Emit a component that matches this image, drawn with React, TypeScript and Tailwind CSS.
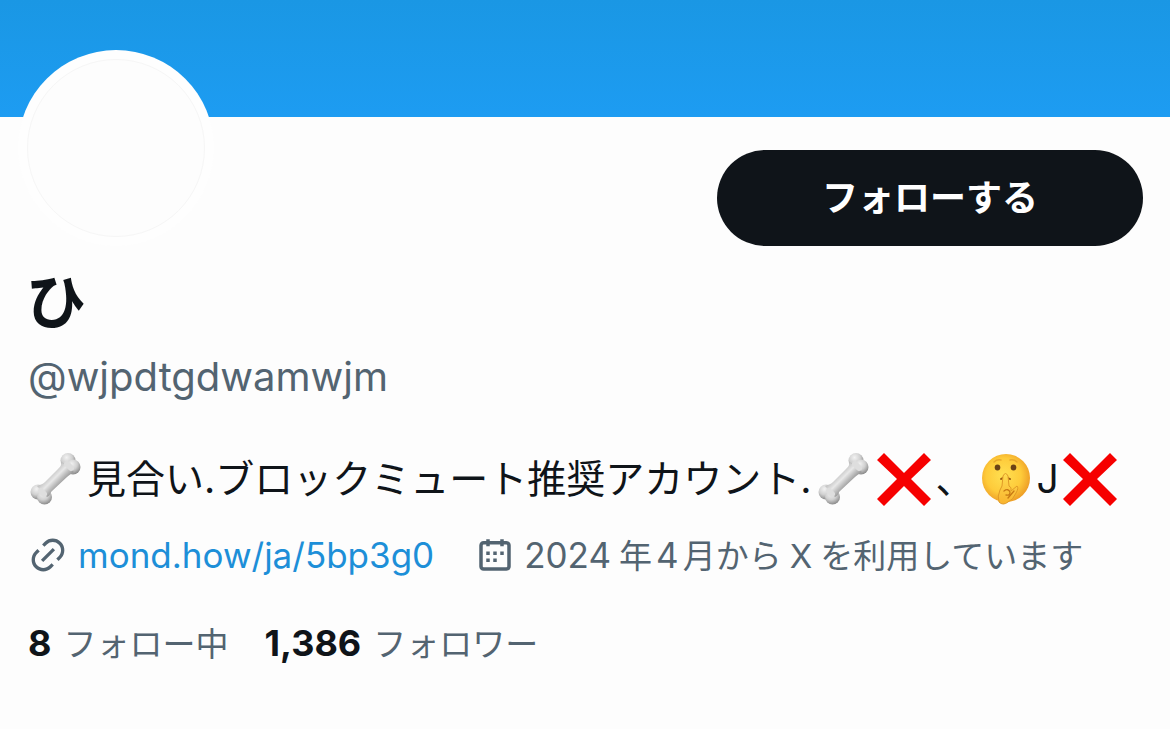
const textFont = "font-['Inter','Noto_Sans_CJK_JP',sans-serif]";

const BoneEmoji = () => (
  <svg viewBox="0 0 58 58" className="size-[58px] shrink-0" role="img" aria-label="bone">
    <defs>
      <radialGradient id="knob" cx="0.4" cy="0.3" r="0.7">
        <stop offset="0" stopColor="#f2f2f2" />
        <stop offset="0.55" stopColor="#d0d0d0" />
        <stop offset="1" stopColor="#8c8c8c" />
      </radialGradient>
      <linearGradient id="shaft" gradientUnits="userSpaceOnUse" x1="22" y1="24" x2="33" y2="35">
        <stop offset="0" stopColor="#c2c2c2" />
        <stop offset="0.4" stopColor="#e8e8e8" />
        <stop offset="1" stopColor="#949494" />
      </linearGradient>
    </defs>
    <circle cx="40" cy="10.5" r="7.5" fill="url(#knob)" />
    <circle cx="10" cy="42" r="7.5" fill="url(#knob)" />
    <circle cx="45" cy="17" r="7.5" fill="url(#knob)" />
    <circle cx="16.5" cy="47" r="7.5" fill="url(#knob)" />
    <path
      d="M33 12C34 15 32 17 30 19L17 32C14 35 11 35 9 36L19 47C22 46 22 43 24 41L39 27C41 25 43 24 46 22Z"
      fill="url(#shaft)"
    />
    <path d="M39 14L43 18M13 41L16 44" stroke="#dedede" strokeWidth="6" strokeLinecap="round" />
  </svg>
);

const CrossEmoji = () => (
  <svg viewBox="0 0 58 58" className="size-[58px] shrink-0" role="img" aria-label="cross mark">
    <path d="M9 3L29 23L49 3L56 10L36 29L56 49L49 56L29 36L9 56L2 49L22 29L2 10Z" fill="#f60000" />
  </svg>
);

const ShushEmoji = () => (
  <svg viewBox="0 0 58 58" className="size-[58px] shrink-0" role="img" aria-label="shushing face">
    <defs>
      <radialGradient id="face" cx="0.45" cy="0.45" r="0.56">
        <stop offset="0" stopColor="#ffe052" />
        <stop offset="0.65" stopColor="#fecb3a" />
        <stop offset="1" stopColor="#ee9f27" />
      </radialGradient>
      <linearGradient id="hand" x1="0" y1="0" x2="0" y2="1">
        <stop offset="0" stopColor="#ffdc50" />
        <stop offset="1" stopColor="#f9b42e" />
      </linearGradient>
    </defs>
    <circle cx="29" cy="28" r="24" fill="url(#face)" />
    <path d="M17 12Q20 9 24 10M33 10Q37 9 40 12" fill="none" stroke="#e8a92c" strokeWidth="1.4" strokeLinecap="round" />
    <ellipse cx="20.5" cy="17.5" rx="2.8" ry="3" fill="#6b4216" />
    <ellipse cx="36.5" cy="17.5" rx="2.8" ry="3" fill="#6b4216" />
    <path d="M24 29Q28 26 33 29" fill="none" stroke="#9a5a12" strokeWidth="2" strokeLinecap="round" />
    <path
      d="M26 26Q28.5 21 31 26L32 36Q35 37 34 41L40 36Q42 38 39 43Q36 50 31 52Q26 56 22 52Q20 46 23 40L25 36Z"
      fill="url(#hand)"
      stroke="#e09a26"
      strokeWidth="1"
      strokeLinejoin="round"
    />
    <path d="M27 41Q31 38 33 42Q33 46 29 45M31 48L37 41" fill="none" stroke="#c87914" strokeWidth="1.3" strokeLinecap="round" />
  </svg>
);

const LinkIcon = () => (
  <svg viewBox="0 0 24 24" className="size-10 shrink-0" fill="#536471" aria-hidden="true">
    <path d="M18.36 5.64c-1.95-1.96-5.11-1.96-7.07 0L9.88 7.05 8.46 5.64l1.42-1.42c2.73-2.73 7.16-2.73 9.9 0 2.73 2.74 2.73 7.17 0 9.9l-1.42 1.42-1.41-1.42 1.41-1.41c1.96-1.96 1.96-5.12 0-7.07zm-2.12 3.53l-7.07 7.07-1.41-1.41 7.07-7.07 1.41 1.41zm-12.02.71l1.42-1.42 1.41 1.42-1.41 1.41c-1.96 1.96-1.96 5.12 0 7.07 1.95 1.96 5.11 1.96 7.07 0l1.41-1.41 1.42 1.41-1.42 1.42c-2.73 2.73-7.16 2.73-9.9 0-2.73-2.74-2.73-7.17 0-9.9z" />
  </svg>
);

const CalendarIcon = () => (
  <svg viewBox="0 0 24 24" className="size-[42px] shrink-0" fill="#536471" aria-hidden="true">
    <path d="M7 4V3h2v1h6V3h2v1h1.5C19.89 4 21 5.12 21 6.5v12c0 1.38-1.11 2.5-2.5 2.5h-13C4.12 21 3 19.88 3 18.5v-12C3 5.12 4.12 4 5.5 4H7zm0 2H5.5c-.27 0-.5.22-.5.5v12c0 .28.23.5.5.5h13c.28 0 .5-.22.5-.5v-12c0-.28-.22-.5-.5-.5H17v1h-2V6H9v1H7V6zm0 6h2v-2H7v2zm0 4h2v-2H7v2zm4-4h2v-2h-2v2zm0 4h2v-2h-2v2zm4-4h2v-2h-2v2z" />
  </svg>
);

const App = () => {
  const stats = [
    { id: "following", count: "8", label: "フォロー中" },
    { id: "followers", count: "1,386", label: "フォロワー" },
  ];

  return (
    <main className={`min-h-screen bg-[#fdfdfd] text-[#0f1419] ${textFont}`}>
      <div className="h-[117px] bg-linear-to-b from-[#1a97e4] to-[#1d9cf2]" />

      <div className="px-7">
        <div className="-mr-px flex items-start justify-between">
          <div className="-mt-[67px] -ml-[10px] size-[196px] rounded-full bg-[#fefefe] p-[9px]">
            <div className="size-full rounded-full border border-[#f6f6f6] bg-[#fdfdfd]" />
          </div>
          <button type="button" className="mt-[33px] h-24 w-[426px] rounded-full bg-[#0f1419] text-4xl font-bold text-white">
            フォローする
          </button>
        </div>

        <h1 className="mt-5 -ml-0.5 text-[60px] leading-[72px] font-bold">ひ</h1>
        <p className="mt-[15px] text-[40px] leading-[48px] text-[#536471]">@wjpdtgdwamwjm</p>

        <p className="mt-[49px] flex h-[58px] items-center gap-px text-[39px] whitespace-nowrap">
          <BoneEmoji />
          <span className="pr-1">見合い.ブロックミュート推奨アカウント.</span>
          <BoneEmoji />
          <CrossEmoji />
          <span className="px-px">、</span>
          <ShushEmoji />
          <span className="px-px">J</span>
          <CrossEmoji />
        </p>

        <div className="mt-[23px] flex h-12 items-center text-[35px] whitespace-nowrap text-[#536471]">
          <LinkIcon />
          <a href="https://mond.how/ja/5bp3g0" className="ml-[10px] text-[#1d8fd8]">
            mond.how/ja/5bp3g0
          </a>
          <div className="ml-10 flex items-center gap-2">
            <CalendarIcon />
            <span>
              2024<span className="mr-1 ml-2 text-[33px]">年</span>4
              <span className="text-[33px]">
                <span className="ml-1">月から</span>
                <span className="mx-2">X</span>を利用しています
              </span>
            </span>
          </div>
        </div>

        <div className="mt-10 flex gap-9 text-[33px] leading-[48px]">
          {stats.map((stat) => (
            <a key={stat.id} href={`#${stat.id}`} className="flex items-baseline gap-3">
              <span className="text-[36px] font-bold">{stat.count}</span>
              <span className="text-[#536471]">{stat.label}</span>
            </a>
          ))}
        </div>
      </div>
    </main>
  );
};

export default App;
